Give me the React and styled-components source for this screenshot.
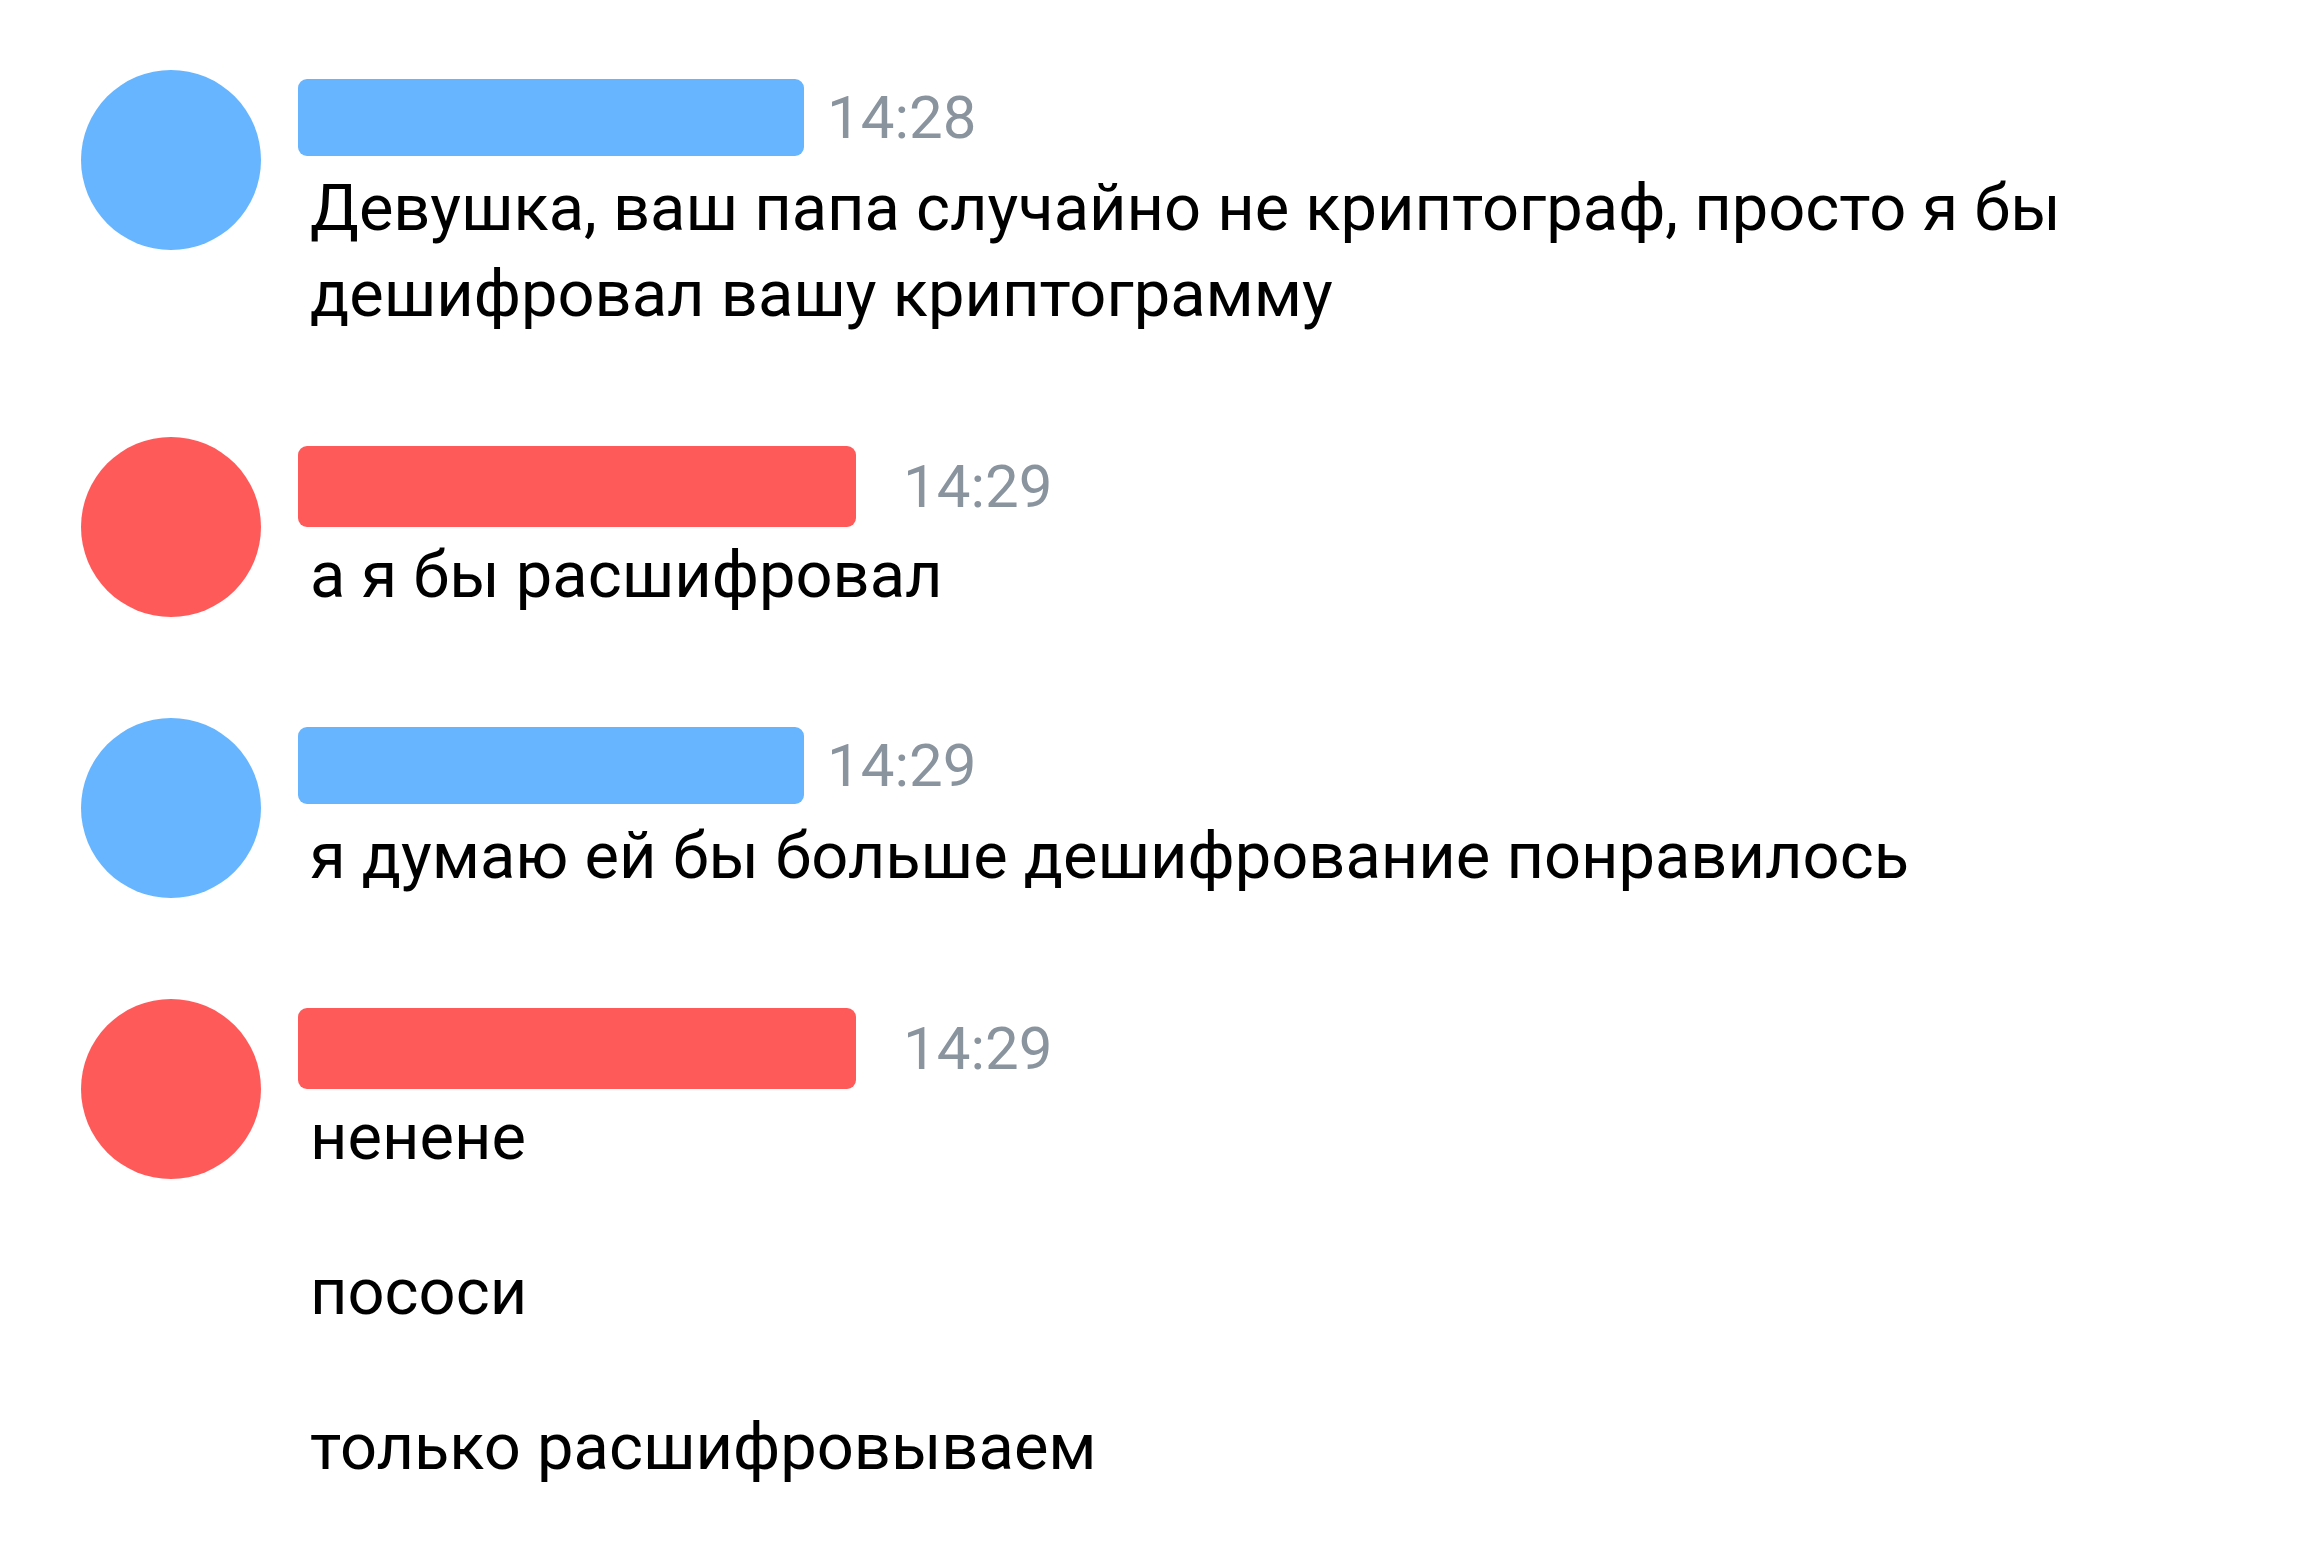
import React from "react";
import styled, { createGlobalStyle } from "styled-components";

const GlobalStyle = createGlobalStyle`
  html, body {
    margin: 0;
    padding: 0;
    background: #ffffff;
  }
  body {
    font-family: Roboto, "Noto Sans", "Liberation Sans", sans-serif;
    -webkit-font-smoothing: antialiased;
  }
`;

const Chat = styled.div`
  display: flex;
  flex-direction: column;
  gap: 100px;
  padding: 70px 40px 40px 81px;
`;

const Row = styled.div`
  display: flex;
  align-items: flex-start;
  gap: 37px;
`;

const Avatar = styled.div`
  width: 180px;
  height: 180px;
  border-radius: 50%;
  flex-shrink: 0;
  background: ${(p) => p.$color};
`;

const Content = styled.div`
  display: flex;
  flex-direction: column;
  min-width: 0;
  padding-top: 9px;
`;

const Header = styled.div`
  display: flex;
  align-items: center;
`;

const NameBar = styled.div`
  width: ${(p) => p.$w}px;
  height: ${(p) => p.$h}px;
  border-radius: 9px;
  background: ${(p) => p.$color};
  flex-shrink: 0;
`;

const Time = styled.span`
  font-family: Roboto, "Liberation Sans", sans-serif;
  font-size: 60px;
  line-height: 1;
  color: #8a949f;
  margin-left: ${(p) => p.$gap}px;
`;

const Body = styled.div`
  display: flex;
  flex-direction: column;
  gap: 69px;
  padding-left: 12px;
  margin-top: ${(p) => p.$mt}px;
`;

const Text = styled.p`
  margin: 0;
  font-family: Roboto, "Liberation Sans", sans-serif;
  font-size: 65px;
  line-height: 86px;
  color: #000000;
`;

const BLUE = "#67b5fe";
const RED = "#ff5a5a";

const messages = [
  {
    color: BLUE,
    barW: 506,
    barH: 77,
    gap: 23,
    time: "14:28",
    lines: [
      "Девушка, ваш папа случайно не криптограф, просто я бы дешифровал вашу криптограмму",
    ],
  },
  {
    color: RED,
    barW: 558,
    barH: 81,
    gap: 47,
    time: "14:29",
    lines: ["а я бы расшифровал"],
  },
  {
    color: BLUE,
    barW: 506,
    barH: 77,
    gap: 23,
    time: "14:29",
    lines: ["я думаю ей бы больше дешифрование понравилось"],
  },
  {
    color: RED,
    barW: 558,
    barH: 81,
    gap: 47,
    time: "14:29",
    lines: ["ненене", "пососи", "только расшифровываем"],
  },
];

export default function App() {
  return (
    <>
      <GlobalStyle />
      <Chat>
        {messages.map((m, i) => (
          <Row key={i}>
            <Avatar $color={m.color} />
            <Content>
              <Header>
                <NameBar $w={m.barW} $h={m.barH} $color={m.color} />
                <Time $gap={m.gap}>{m.time}</Time>
              </Header>
              <Body $mt={86 - m.barH}>
                {m.lines.map((l, j) => (
                  <Text key={j}>{l}</Text>
                ))}
              </Body>
            </Content>
          </Row>
        ))}
      </Chat>
    </>
  );
}
